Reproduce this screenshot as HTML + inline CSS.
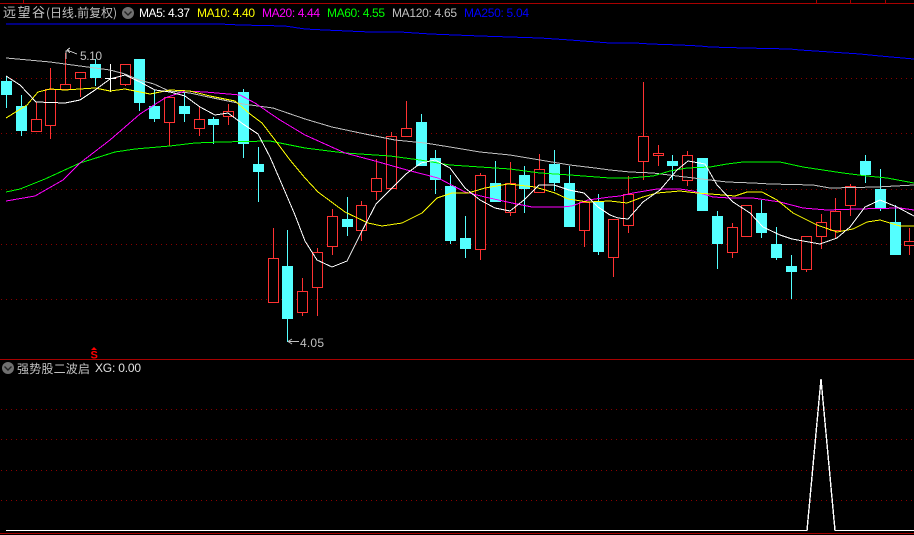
<!DOCTYPE html>
<html lang="zh"><head><meta charset="utf-8"><title>远望谷</title>
<style>
html,body{margin:0;padding:0;background:#000;width:914px;height:535px;overflow:hidden}
svg{display:block;position:absolute;left:0;top:0}
text{font-family:"Liberation Sans","Noto Sans CJK SC",sans-serif;font-size:12px}
.cn{font-family:"Noto Sans CJK SC","WenQuanYi Zen Hei",sans-serif;font-size:12px;fill:#c0c0c0}
.g line{stroke:#8a0000;stroke-width:1;stroke-dasharray:1 4}
.w{stroke:#54ffff;stroke-width:1;fill:none}
.r{stroke:#ff3232;stroke-width:1;fill:none}
.c rect{fill:#54ffff;stroke:none}
.b rect{fill:#000;stroke:#ff3232;stroke-width:1}
polyline{fill:none;stroke-width:1;shape-rendering:crispEdges}
</style></head><body>
<svg width="914" height="535" viewBox="0 0 914 535" xmlns="http://www.w3.org/2000/svg">
<rect width="914" height="535" fill="#000"/>
<g shape-rendering="crispEdges">
<path d="M0 3.5H914M23.5 0V3M816.5 0V3M850.5 0V3M885.5 0V3M0 359.5H914M0 533.5H914" stroke="#a80000" stroke-width="1" fill="none"/>
<g class="g">
<line x1="1" x2="914" y1="78.5" y2="78.5"/><line x1="1" x2="914" y1="133.5" y2="133.5"/><line x1="1" x2="914" y1="189.5" y2="189.5"/><line x1="1" x2="914" y1="244.5" y2="244.5"/><line x1="1" x2="914" y1="299.5" y2="299.5"/>
<line x1="1" x2="914" y1="409.5" y2="409.5"/><line x1="1" x2="914" y1="439.5" y2="439.5"/><line x1="1" x2="914" y1="470.5" y2="470.5"/><line x1="1" x2="914" y1="500.5" y2="500.5"/>
</g>
<path class="w" d="M6.5 77V108M21.5 95V136M95.5 59V86M139.5 59V111M154.5 90V122M184.5 92V122M213.5 117V144M243.5 89V158M258.5 147V202M287.5 230V342M347.5 197V236M421.5 114V166M435.5 150V194M450.5 175V244M465.5 216V258M495.5 161V202M524.5 166V213M554.5 150V191M569.5 166V227M598.5 194V255M672.5 155V180M717.5 211V269M761.5 200V238M776.5 227V260M791.5 255V299M865.5 155V183M880.5 169V211M895.5 205V255"/>
<g class="c">
<rect x="1" y="81" width="11" height="14"/><rect x="16" y="106" width="11" height="25"/><rect x="90" y="64" width="11" height="14"/><rect x="134" y="59" width="11" height="44"/><rect x="149" y="106" width="11" height="13"/><rect x="179" y="106" width="11" height="8"/><rect x="208" y="119" width="11" height="6"/><rect x="238" y="92" width="11" height="52"/><rect x="253" y="164" width="11" height="8"/><rect x="282" y="266" width="11" height="53"/><rect x="342" y="219" width="11" height="8"/><rect x="416" y="122" width="11" height="44"/><rect x="430" y="158" width="11" height="22"/><rect x="445" y="186" width="11" height="55"/><rect x="460" y="238" width="11" height="11"/><rect x="490" y="183" width="11" height="19"/><rect x="519" y="175" width="11" height="14"/><rect x="549" y="164" width="11" height="19"/><rect x="564" y="183" width="11" height="44"/><rect x="593" y="202" width="11" height="50"/><rect x="667" y="161" width="11" height="5"/><rect x="697" y="158" width="11" height="53"/><rect x="712" y="216" width="11" height="28"/><rect x="756" y="213" width="11" height="20"/><rect x="771" y="244" width="11" height="14"/><rect x="786" y="266" width="11" height="6"/><rect x="860" y="161" width="11" height="14"/><rect x="875" y="189" width="11" height="20"/><rect x="890" y="222" width="11" height="33"/>
</g>
<path class="r" d="M36.5 102V119M50.5 68V139M65.5 53V84M80.5 72V97M125.5 64V86M169.5 97V146M199.5 107V136M228.5 104V125M273.5 228V258M302.5 278V316M317.5 248V316M332.5 209V255M361.5 201V241M376.5 159V200M391.5 132V189M406.5 101V128M480.5 173V260M510.5 162V216M539.5 154V193M584.5 231V247M613.5 258V277M628.5 176V233M643.5 82V180M658.5 145V166M687.5 151V186M732.5 223V258M806.5 270V272M821.5 214V249M835.5 198V238M850.5 184V216M909.5 228V255"/>
<g class="b">
<rect x="31.5" y="119.5" width="10" height="12"/><rect x="45.5" y="89.5" width="10" height="36"/><rect x="60.5" y="84.5" width="10" height="5"/><rect x="75.5" y="72.5" width="10" height="6"/><rect x="120.5" y="64.5" width="10" height="20"/><rect x="164.5" y="97.5" width="10" height="25"/><rect x="194.5" y="119.5" width="10" height="9"/><rect x="223.5" y="111.5" width="10" height="5"/><rect x="268.5" y="258.5" width="10" height="44"/><rect x="297.5" y="291.5" width="10" height="21"/><rect x="312.5" y="252.5" width="10" height="35"/><rect x="327.5" y="216.5" width="10" height="30"/><rect x="356.5" y="205.5" width="10" height="25"/><rect x="371.5" y="178.5" width="10" height="13"/><rect x="386.5" y="136.5" width="10" height="52"/><rect x="401.5" y="128.5" width="10" height="8"/><rect x="475.5" y="175.5" width="10" height="74"/><rect x="505.5" y="183.5" width="10" height="29"/><rect x="534.5" y="169.5" width="10" height="23"/><rect x="579.5" y="202.5" width="10" height="28"/><rect x="608.5" y="219.5" width="10" height="38"/><rect x="623.5" y="194.5" width="10" height="31"/><rect x="638.5" y="136.5" width="10" height="25"/><rect x="653.5" y="153.5" width="10" height="2"/><rect x="682.5" y="155.5" width="10" height="25"/><rect x="727.5" y="227.5" width="10" height="25"/><rect x="741.5" y="205.5" width="10" height="31"/><rect x="801.5" y="236.5" width="10" height="33"/><rect x="816.5" y="222.5" width="10" height="14"/><rect x="830.5" y="211.5" width="10" height="19"/><rect x="845.5" y="186.5" width="10" height="19"/><rect x="904.5" y="241.5" width="10" height="4"/>
</g>
<path d="M110.5 64V92M105 78.5H116" stroke="#fff" stroke-width="1" fill="none"/>
</g>
<polyline stroke="#0000ff" points="6,24 220,24 240,25 285,26 305,29 325,30 370,32 400,32 430,34 480,36 540,38 570,40 610,43 635,43 650,44 680,45 700,46 710,47 745,48 790,49 800,50 830,52 860,54 880,56 914,59"/>
<polyline stroke="#c0c0c0" points="6,58 50,62 110,70 125,74 139,80 154,84 169,91 190,93 213,98 243,104 258,106 273,108 305,119 332,127 365,134 395,140 425,143 450,147 480,152 510,155 540,160 570,165 595,168 610,170 630,172 653,173 677,176 710,180 727,182 753,183 770,184 813,185 830,188 877,187 914,185"/>
<polyline stroke="#00ff00" points="6,192 20,189 45,179 80,163 115,152 135,149 170,146 195,143 220,142 270,141 305,148 345,153 390,156 420,160 450,165 480,167 510,169 540,173 570,175 610,178 630,178 653,176 670,171 687,168 710,167 727,164 743,162 780,162 803,167 823,170 843,173 867,176 887,178 914,183"/>
<polyline stroke="#ff00ff" points="6,201 35,196 63,180 80,163 110,140 140,114 165,98 185,91 205,92 240,95 255,103 280,120 305,135 345,153 375,161 407,170 438,178 465,192 485,197 512,203 532,207 562,207 572,206 588,200 610,197 620,196 633,193 657,189 680,189 693,191 713,197 730,198 753,198 780,202 803,208 827,210 857,209 900,208 914,210"/>
<polyline stroke="#ffff00" points="6,118 27,105 38,92 50,89 65,90 95,88 110,91 125,89 150,94 170,90 190,91 210,96 235,101 250,114 262,123 275,140 290,160 305,178 318,192 345,212 368,223 382,226 402,223 422,213 437,198 452,193 468,193 485,188 508,184 535,187 555,193 568,199 588,202 610,201 627,203 643,197 657,193 680,191 697,193 723,195 735,196 747,192 762,192 777,200 793,213 817,225 837,232 853,229 867,222 880,220 900,226 914,226"/>
<polyline stroke="#ffffff" points="6,76 20,85 36,102 65,103 80,100 95,90 110,79 125,75 140,82 155,90 170,92 185,96 200,107 215,115 228,113 243,124 258,134 270,157 280,180 295,215 305,241 317,260 332,267 347,261 361,233 376,204 391,189 406,174 421,163 435,160 450,168 465,188 480,200 495,208 510,211 524,200 539,185 554,185 569,190 584,193 598,207 610,215 618,218 628,219 643,202 660,190 677,170 688,161 705,164 717,185 733,202 750,213 763,227 780,235 792,239 820,244 837,238 850,227 865,207 880,200 897,207 914,216"/>
<path d="M6 530.5H807L821 379 835 530.5H914" fill="none" stroke="#fff" stroke-width="1.4" shape-rendering="crispEdges"/>
<text class="cn" x="3" y="17" textLength="42" style="font-size:13px">远望谷</text>
<text class="cn" x="46" y="17" textLength="71">(日线.前复权)</text>
<circle cx="128" cy="13" r="6" fill="#707070"/>
<path d="M124.5 11.5L128 15 131.5 11.500" fill="none" stroke="#222" stroke-width="1.4"/>
<text x="139" y="17" fill="#ffffff" textLength="51">MA5: 4.37</text>
<text x="197" y="17" fill="#ffff00" textLength="58">MA10: 4.40</text>
<text x="262" y="17" fill="#ff00ff" textLength="58">MA20: 4.44</text>
<text x="327" y="17" fill="#00ff00" textLength="58">MA60: 4.55</text>
<text x="392" y="17" fill="#c0c0c0" textLength="65">MA120: 4.65</text>
<text x="464" y="17" fill="#0000ff" textLength="65">MA250: 5.04</text>
<text x="80" y="60" fill="#c0c0c0" textLength="22">5.10</text>
<path d="M66 59V51H69M67 50L77 54M67 50L70 48M67 50L70 53" fill="none" stroke="#c0c0c0" stroke-width="1" shape-rendering="crispEdges"/>
<text x="300" y="347" fill="#c0c0c0" textLength="24">4.05</text>
<path d="M288 341.5H299M288 341.5L292 339M288 341.5L292 344" fill="none" stroke="#c0c0c0" stroke-width="1"/>
<path d="M94 347L97 350H91Z" fill="#ff0000"/>
<text x="90.500" y="358.500" fill="#ff0000" style="font-size:11px;font-weight:bold">S</text>
<circle cx="8" cy="368" r="6" fill="#707070"/>
<path d="M4.500 366.500L8 370 11.500 366.500" fill="none" stroke="#222" stroke-width="1.4"/>
<text class="cn" x="17" y="373" textLength="73">强势股二波启</text>
<text x="95" y="372" fill="#e0e0e0" textLength="46">XG: 0.00</text>
</svg>
</body></html>
